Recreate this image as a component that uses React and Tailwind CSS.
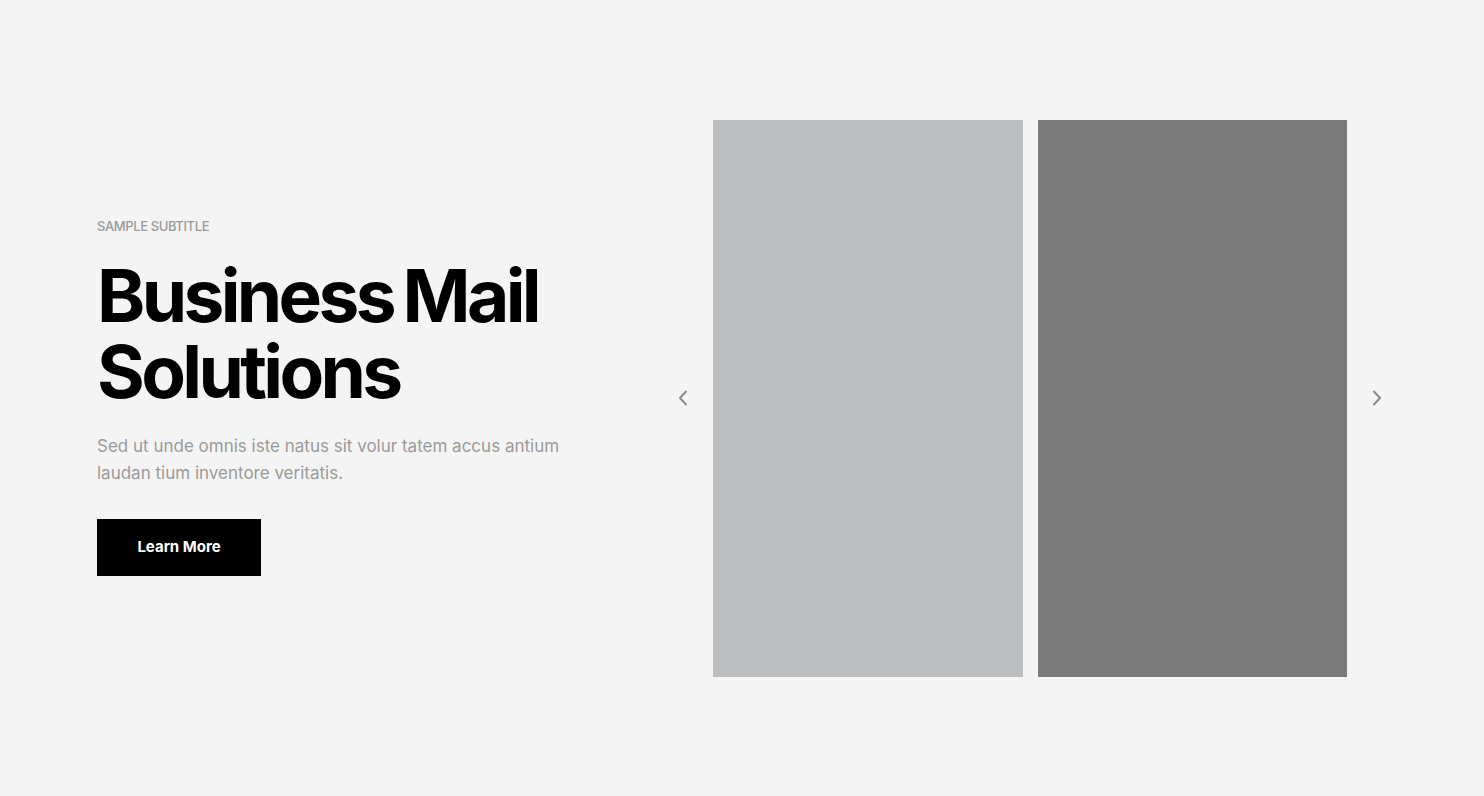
import React from 'react';

function Arrow({ dir }) {
  return (
    <svg width="10" height="16" viewBox="0 0 10 16" fill="none" stroke="#8a8a8e" strokeWidth="2" strokeLinecap="round" strokeLinejoin="round">
      {dir === 'left' ? <path d="M8 1.5 L2 8 L8 14.5" /> : <path d="M2 1.5 L8 8 L2 14.5" />}
    </svg>
  );
}

export default function App() {
  return (
    <div className="min-h-[796px] w-full bg-[#f4f4f4] font-['Inter',sans-serif]">
      <section className="flex h-[796px] items-center">
        {/* Text column */}
        <div className="w-[668px] shrink-0 pb-[3px] pl-[97px]">
          <p className="text-[13px] font-medium uppercase leading-4 tracking-[-0.03em] text-[#9a9a9a]">Sample Subtitle</p>
          <h1 className="mt-[24px] text-[73px] font-bold leading-[76px] tracking-[-0.05em] text-black [word-spacing:-4px]">
            Business Mail
            <br />
            Solutions
          </h1>
          <p className="mt-[23px] max-w-[480px] text-[17px] leading-[27px] text-[#9a9a9a]">
            Sed ut unde omnis iste natus sit volur tatem accus antium laudan tium inventore veritatis.
          </p>
          <button className="mt-[32px] flex h-[57px] w-[164px] items-center justify-center bg-black text-[15px] font-bold text-white">
            Learn More
          </button>
        </div>

        {/* Slider */}
        <div className="flex w-[45px] shrink-0 justify-start pl-[10px]">
          <Arrow dir="left" />
        </div>
        <div className="flex gap-[15px]">
          <div className="h-[557px] w-[310px] bg-[#bcbdbf]" />
          <div className="h-[557px] w-[309px] bg-[#7b7b7c]" />
        </div>
        <div className="flex shrink-0 pl-[25px]">
          <Arrow dir="right" />
        </div>
      </section>
    </div>
  );
}
